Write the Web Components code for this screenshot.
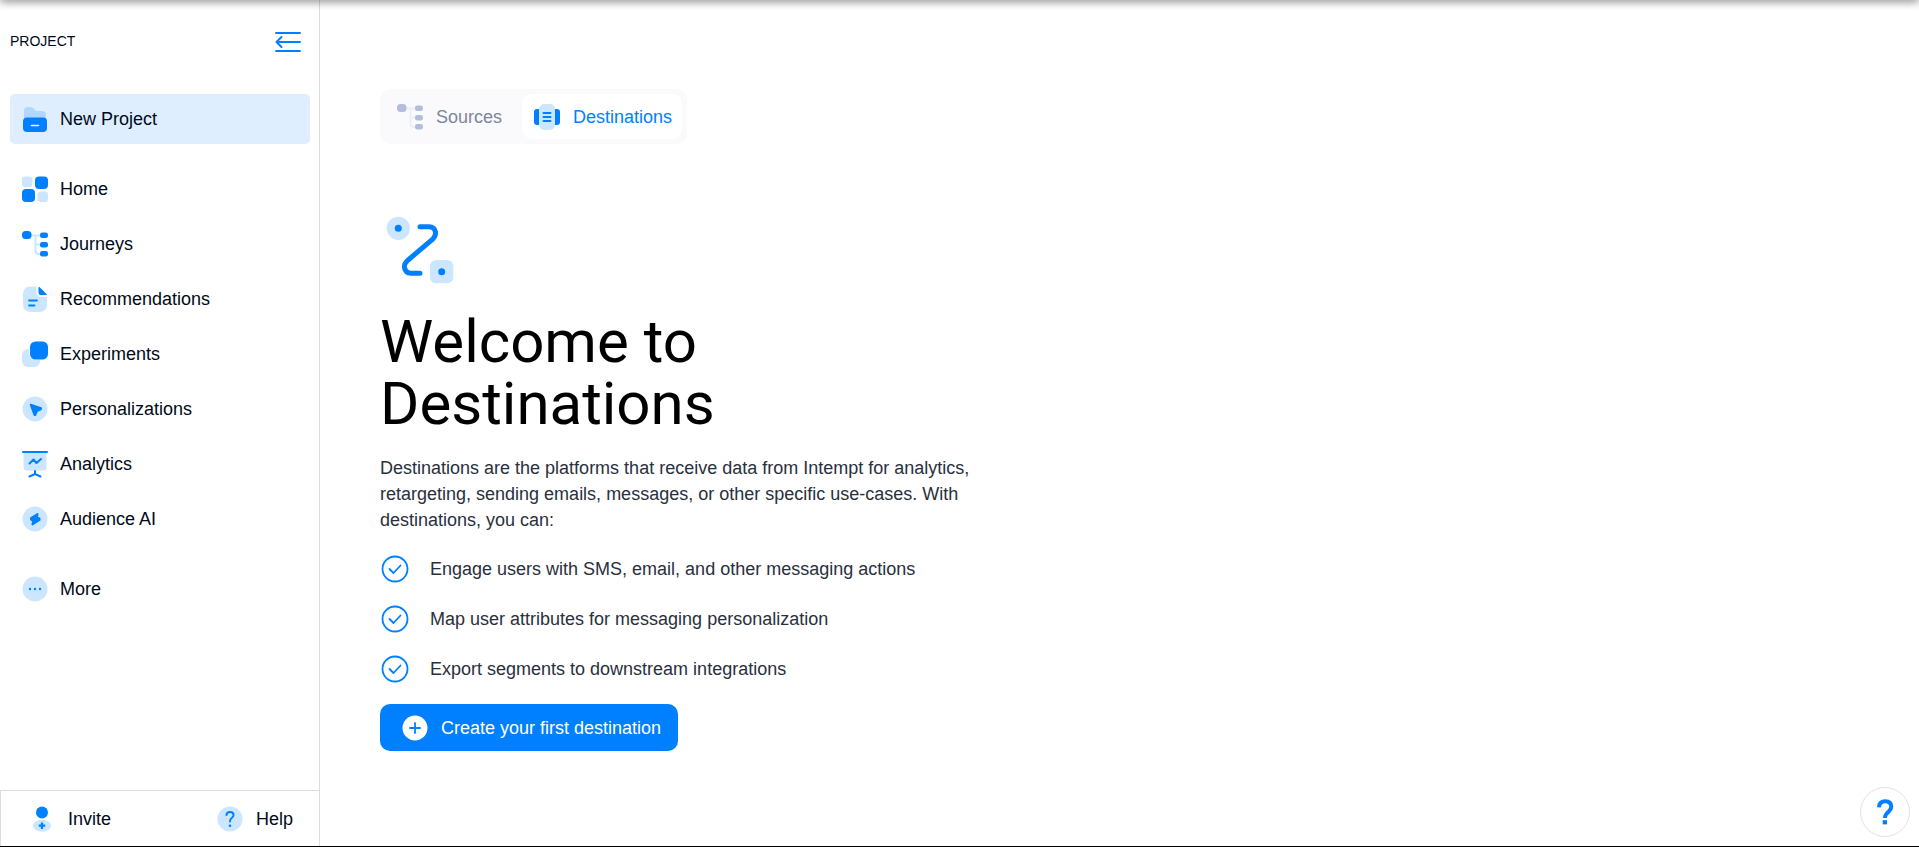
<!DOCTYPE html>
<html lang="en">
<head>
<meta charset="UTF-8">
<meta name="viewport" content="width=device-width, initial-scale=1.0">
<title>Destinations</title>
<style>
    html, body {
        margin: 0;
        height: 100%;
    }
    body {
        --blue: #0080ff;
        --light: #cce6ff;
        --line: #dcdcdc;
        font-family: "Liberation Sans", Arial, sans-serif;
        font-size: 18px;
        line-height: 26px;
        color: #000a1a;
        background: #fff;
    }
</style>
</head>
<body>
<app-shell>
    <side-bar slot="side" label="PROJECT">
        <nav-item slot="project" icon="folder" active>New Project</nav-item>
        <nav-item icon="home">Home</nav-item>
        <nav-item icon="tree">Journeys</nav-item>
        <nav-item icon="note">Recommendations</nav-item>
        <nav-item icon="layers">Experiments</nav-item>
        <nav-item icon="cursor">Personalizations</nav-item>
        <nav-item icon="board">Analytics</nav-item>
        <nav-item icon="bolt">Audience AI</nav-item>
        <nav-item slot="more" icon="dots">More</nav-item>
        <foot-link slot="foot" icon="invite">Invite</foot-link>
        <foot-link slot="foot" icon="help">Help</foot-link>
    </side-bar>
    <tab-group>
        <tab-button icon="tree">Sources</tab-button>
        <tab-button icon="carousel" active>Destinations</tab-button>
    </tab-group>
    <welcome-panel>
        <span slot="title">Welcome to Destinations</span>
        <span slot="text">Destinations are the platforms that receive data from Intempt for analytics, retargeting, sending emails, messages, or other specific use-cases. With destinations, you can:</span>
        <check-item>Engage users with SMS, email, and other messaging actions</check-item>
        <check-item>Map user attributes for messaging personalization</check-item>
        <check-item>Export segments to downstream integrations</check-item>
        <primary-button slot="action">Create your first destination</primary-button>
    </welcome-panel>
    <help-bubble slot="float"></help-bubble>
</app-shell>

<script>
const icons = {
    collapse: `<g fill="none" stroke="var(--dark)" stroke-width="2" stroke-linecap="round"><path d="M2 5H26M3 14H26M2 23H26"/><path d="M7.500 9L2.500 14L7.500 19" stroke-linejoin="round"/></g>`,
    folder: `<path fill="#b0d8ff" d="M3 17V6Q3 2 7 2H9.500Q11.500 2 13 4L14.500 5.500Q15 6 16 6H20.500Q25 6 25 10.500V17Z"/><path fill="var(--dark)" d="M6 12.500H22Q26 12.500 26 16.500V23Q26 27 22 27H6Q2 27 2 23V16.500Q2 12.500 6 12.500Z"/><path d="M10.500 20.500H17.500" stroke="#dff" stroke-width="1.600" stroke-linecap="round"/>`,
    home: `<g fill="var(--pale)"><rect x="1" y="1.500" width="10.500" height="10.500" rx="3"/><rect x="16.500" y="16.500" width="10.500" height="10.500" rx="3"/></g><g fill="var(--dark)"><rect x="14" y="1.500" width="13" height="12.500" rx="4"/><rect x="1" y="14" width="13" height="13" rx="4"/></g>`,
    tree: `<path fill="none" stroke="var(--pale)" stroke-width="2" d="M8 5.500H20M14.500 5.500V21Q14.500 24 18 24H20M14.500 14.500H20"/><g fill="var(--dark)"><rect x="1" y="1" width="9.500" height="8" rx="3.500"/><rect x="19" y="2.500" width="8" height="5.500" rx="2.200"/><rect x="19" y="12" width="8" height="5.500" rx="2.200"/><rect x="19" y="21" width="8" height="5.500" rx="2.200"/></g>`,
    note: `<path fill="var(--pale)" d="M15.500 1.500V7Q15.500 12 20 12H26V19Q26 27 18 27H10Q2 27 2 19V9.500Q2 1.500 10 1.500Z"/><path fill="var(--dark)" d="M17.500 2.500Q17.500 1 18.700 2.300L25.500 9Q26.300 10 25 10H20Q17.500 10 17.500 7.500Z"/><path d="M8 15.500H16M8 20.500H13.500" stroke="var(--dark)" stroke-width="1.800" stroke-linecap="round"/>`,
    layers: `<rect x="1" y="9" width="18" height="18" rx="6" fill="var(--pale)"/><rect x="8" y="0" width="20" height="20" rx="7" fill="#fff"/><rect x="9" y="1.500" width="18" height="18" rx="5.500" fill="var(--dark)"/>`,
    cursor: `<circle cx="14" cy="14" r="12.500" fill="var(--pale)"/><path fill="var(--dark)" stroke="var(--dark)" stroke-width="2" stroke-linejoin="round" d="M9.700 9.700L20 13.200V14L16 16L14.200 20H13.500Z"/>`,
    board: `<path fill="var(--pale)" d="M2.500 3H25.500V17.500Q25.500 20.500 22.500 20.500H5.500Q2.500 20.500 2.500 17.500Z"/><path fill="none" stroke="var(--dark)" stroke-width="2" stroke-linecap="round" stroke-linejoin="round" d="M2 2H26M8.500 13.500L12.500 9.500L15.500 13L20 9M14 21V23.500M8.500 26.500L14 24L19.500 26.500"/>`,
    bolt: `<circle cx="14" cy="14" r="12.500" fill="var(--pale)"/><path fill="var(--dark)" stroke="var(--dark)" stroke-width="2" stroke-linejoin="round" d="M16.500 9L10 13V14.500L12 15.500L11.500 19.500L18.500 15V13.500L16 12.500Z"/>`,
    dots: `<circle cx="14" cy="14" r="12.500" fill="var(--pale)"/><g fill="var(--dark)"><circle cx="9" cy="14" r="1.200"/><circle cx="14" cy="14" r="1.200"/><circle cx="19" cy="14" r="1.200"/></g>`,
    invite: `<circle cx="14" cy="7.500" r="6" fill="var(--dark)"/><ellipse cx="14" cy="20.700" rx="9" ry="6" fill="var(--pale)"/><path d="M14 17.500V24M10.800 20.700H17.200" stroke="var(--dark)" stroke-width="2.200"/>`,
    help: `<circle cx="14" cy="14" r="12.500" fill="var(--pale)"/><path fill="none" stroke="var(--dark)" stroke-width="2" stroke-linecap="round" d="M10.500 10Q10.700 7 14 7Q17.500 7 17.500 10Q17.500 11.800 15.700 13Q14 14.200 14 16.500"/><circle cx="14" cy="20.800" r="1.300" fill="var(--dark)"/>`,
    carousel: `<g fill="var(--dark)"><rect x="1" y="6" width="8" height="16" rx="3"/><rect x="19" y="6" width="8" height="16" rx="3"/></g><rect x="6" y="1" width="16" height="26" rx="5" fill="var(--pale)"/><path d="M10.500 10H17.500M10.500 14H17.500M10.500 18H17.500" stroke="var(--dark)" stroke-width="2" stroke-linecap="round"/>`,
    check: `<circle cx="14" cy="14" r="12.500" fill="none" stroke="var(--dark)" stroke-width="1.800"/><path d="M8.500 14L12.500 18L19.500 10.500" fill="none" stroke="var(--dark)" stroke-width="1.800" stroke-linecap="round" stroke-linejoin="round"/>`,
    plus: `<circle cx="14" cy="14" r="12.500" fill="#fff"/><path d="M14 9V19M9 14H19" stroke="var(--dark)" stroke-width="1.800" stroke-linecap="round"/>`,
    question: `<path fill="none" stroke="var(--dark)" stroke-width="4" d="M8 9.300Q8.400 3.300 14.200 3.300Q20.300 3.300 20.300 8.800Q20.300 11.200 17.500 13.700Q14 16.500 14 20"/><path fill="var(--dark)" d="M11.700 22.200H16V26.400H11.700Z"/>`,
    route: `<g fill="var(--pale)"><circle cx="14.300" cy="14.300" r="11.600"/><rect x="46" y="46" width="23.300" height="23.300" rx="6"/></g><g fill="var(--dark)"><circle cx="14.300" cy="14.300" r="3.500"/><circle cx="57.700" cy="57.700" r="3.500"/></g><path fill="none" stroke="var(--dark)" stroke-width="5" stroke-linecap="round" d="M36 12.800H45Q50.500 13 51.500 18Q51.800 22 49 24.800L23.500 46.500Q20 50 20.500 53.500Q21.500 59.200 27 59.300H36"/>`
};

class BaseElement extends HTMLElement {
    constructor() {
        super();
        this.attachShadow({ mode: "open" });
    }
    getTemplate() {
        const template = document.createElement('template');
        template.innerHTML = `<style>${this.getStyles()}</style>${this.getMarkup()}`;
        return template;
    }
    connectedCallback() {
        if (this.shadowRoot.childNodes.length) return;
        this.shadowRoot.appendChild(this.getTemplate().content.cloneNode(true));
    }
}

class AppIcon extends BaseElement {
    getMarkup() {
        const name = this.getAttribute('name');
        const box = name === 'route' ? 72 : 28;
        return `<svg viewBox="0 0 ${box} ${box}" aria-hidden="true">${icons[name]}</svg>`;
    }
    getStyles() {
        return `
        :host {
            display: block;
            flex: none;
            width: 28px;
            height: 28px;
            --dark: var(--icon-dark, var(--blue));
            --pale: var(--icon-pale, var(--light));
        }
        svg { display: block; width: 100%; height: 100%; }
        `;
    }
}

class AppShell extends BaseElement {
    getMarkup() {
        return `
        <div class="shade"></div>
        <slot name="side"></slot>
        <main><slot></slot></main>
        <slot name="float"></slot>
        `;
    }
    getStyles() {
        return `
        :host {
            display: grid;
            grid-template-columns: 320px 1fr;
            min-height: 100vh;
            box-sizing: border-box;
            border-bottom: 1px solid #000;
        }
        .shade {
            position: absolute;
            top: -4px;
            left: 0;
            right: 0;
            height: 4px;
            box-shadow: 0 0 10px rgba(0, 0, 0, 0.9);
        }
        main {
            padding: 89px 60px 60px;
        }
        `;
    }
}

class SideBar extends BaseElement {
    getMarkup() {
        return `
        <header>
            <span>${this.getAttribute('label')}</span>
            <button type="button" aria-label="Collapse menu"><app-icon name="collapse"></app-icon></button>
        </header>
        <nav>
            <slot name="project"></slot>
            <div class="group"><slot></slot></div>
            <slot name="more"></slot>
        </nav>
        <footer><slot name="foot"></slot></footer>
        `;
    }
    getStyles() {
        return `
        :host {
            display: flex;
            flex-direction: column;
            box-sizing: border-box;
            border-right: 1px solid var(--line);
        }
        header {
            display: flex;
            align-items: flex-start;
            justify-content: space-between;
            padding: 28px 17px 38px 10px;
            font-size: 14px;
        }
        button {
            padding: 0;
            border: 0;
            background: none;
            cursor: pointer;
        }
        nav {
            padding: 0 9px 0 10px;
        }
        .group {
            display: grid;
            gap: 5px;
            margin: 20px 0;
        }
        footer {
            display: flex;
            justify-content: space-between;
            margin-top: auto;
            padding: 14px 26px 13px 27px;
            border-top: 1px solid var(--line);
            border-left: 1px solid var(--line);
        }
        `;
    }
}

class NavItem extends BaseElement {
    getMarkup() {
        return `<a href="#"><app-icon name="${this.getAttribute('icon')}"></app-icon><slot></slot></a>`;
    }
    getStyles() {
        return `
        :host { display: block; }
        a {
            display: flex;
            align-items: center;
            gap: 11px;
            padding: 11px;
            border-radius: 5px;
            color: inherit;
            text-decoration: none;
        }
        :host([active]) a { background: #deeeff; }
        `;
    }
}

class FootLink extends BaseElement {
    getMarkup() {
        return `<a href="#"><app-icon name="${this.getAttribute('icon')}"></app-icon><slot></slot></a>`;
    }
    getStyles() {
        return `
        :host { display: block; }
        a {
            display: flex;
            align-items: center;
            gap: 12px;
            color: inherit;
            text-decoration: none;
        }
        `;
    }
}

class TabGroup extends BaseElement {
    getMarkup() {
        return `<slot></slot>`;
    }
    getStyles() {
        return `
        :host {
            display: flex;
            width: fit-content;
            padding: 5px;
            border-radius: 10px;
            background: #fafafc;
        }
        `;
    }
}

class TabButton extends BaseElement {
    getMarkup() {
        return `<button type="button"><app-icon name="${this.getAttribute('icon')}"></app-icon><slot></slot></button>`;
    }
    getStyles() {
        return `
        :host {
            display: block;
            --icon-dark: #b4bedc;
            --icon-pale: #eceef6;
        }
        :host([active]) {
            --icon-dark: var(--blue);
            --icon-pale: var(--light);
        }
        button {
            display: flex;
            align-items: center;
            gap: 12px;
            height: 45px;
            padding: 0 20px 0 11px;
            border: 0;
            border-radius: 10px;
            background: none;
            font: inherit;
            color: #7d869c;
            cursor: pointer;
        }
        :host([active]) button {
            padding-right: 10px;
            background: #fff;
            color: var(--blue);
        }
        `;
    }
}

class WelcomePanel extends BaseElement {
    getMarkup() {
        return `
        <app-icon name="route"></app-icon>
        <h1><slot name="title"></slot></h1>
        <p><slot name="text"></slot></p>
        <div class="list" role="list"><slot></slot></div>
        <slot name="action"></slot>
        `;
    }
    getStyles() {
        return `
        :host {
            display: block;
            max-width: 600px;
            margin-top: 70px;
            color: #29303d;
        }
        app-icon {
            width: 72px;
            height: 72px;
            margin-left: 4px;
        }
        h1 {
            max-width: 400px;
            margin: 25px 0 20px;
            font: 400 60px/62px Roboto, sans-serif;
            color: #000;
        }
        p {
            margin: 0;
        }
        .list {
            display: grid;
            gap: 22px;
            margin: 22px 0 21px;
        }
        `;
    }
}

class CheckItem extends BaseElement {
    getMarkup() {
        return `<app-icon name="check"></app-icon><slot></slot>`;
    }
    getStyles() {
        return `
        :host {
            display: flex;
            align-items: center;
            gap: 21px;
            padding-left: 1px;
        }
        `;
    }
    connectedCallback() {
        super.connectedCallback();
        this.setAttribute('role', 'listitem');
    }
}

class PrimaryButton extends BaseElement {
    getMarkup() {
        return `<button type="button"><app-icon name="plus"></app-icon><slot></slot></button>`;
    }
    getStyles() {
        return `
        :host { display: block; }
        button {
            display: flex;
            align-items: center;
            gap: 12px;
            height: 47px;
            padding: 0 17px 0 21px;
            border: 0;
            border-radius: 10px;
            background: var(--blue);
            font: inherit;
            color: #fff;
            cursor: pointer;
        }
        `;
    }
}

class HelpBubble extends BaseElement {
    getMarkup() {
        return `<button type="button" aria-label="Help"><app-icon name="question"></app-icon></button>`;
    }
    getStyles() {
        return `
        :host {
            position: fixed;
            right: 9px;
            bottom: 10px;
        }
        button {
            display: grid;
            place-items: center;
            width: 50px;
            height: 50px;
            padding: 0;
            border: 1px solid #e2e2e6;
            border-radius: 50%;
            background: #fff;
            cursor: pointer;
        }
        `;
    }
}

customElements.define('app-icon', AppIcon);
customElements.define('app-shell', AppShell);
customElements.define('side-bar', SideBar);
customElements.define('nav-item', NavItem);
customElements.define('foot-link', FootLink);
customElements.define('tab-group', TabGroup);
customElements.define('tab-button', TabButton);
customElements.define('welcome-panel', WelcomePanel);
customElements.define('check-item', CheckItem);
customElements.define('primary-button', PrimaryButton);
customElements.define('help-bubble', HelpBubble);
</script>
</body>
</html>
